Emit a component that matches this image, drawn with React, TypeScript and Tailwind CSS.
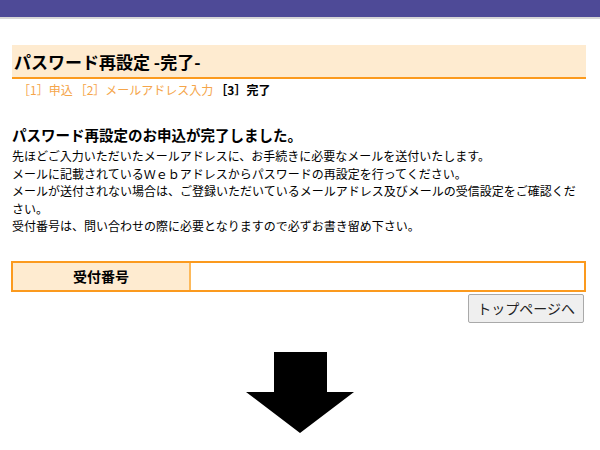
export default function App() {
  const font = { fontFamily: '"Noto Sans CJK JP", "Noto Sans", sans-serif' };
  return (
    <div className="w-[600px] h-[450px] bg-white text-black overflow-hidden" style={font}>
      {/* Header bar */}
      <div className="h-[17px] bg-[#4e4a97]" />
      <div className="h-[2px] bg-[#d6d6d6]" />

      <div className="pl-[12px] pr-[14px] pt-[26px]">
        {/* Title */}
        <div className="h-[34px] bg-[#feebd0] border-b-2 border-[#fb9a1e] flex items-center pl-[2px]">
          <h1 className="text-[17px] font-bold leading-none">パスワード再設定 -完了-</h1>
        </div>

        {/* Steps */}
        <div className="mt-[2px] pl-[6px] text-[12px] leading-[18px] flex gap-[2px]">
          <span className="text-[#f5a54a]">［1］申込</span>
          <span className="text-[#f5a54a]">［2］メールアドレス入力</span>
          <span className="font-bold">［3］完了</span>
        </div>

        {/* Message */}
        <h2 className="mt-[26px] text-[14.5px] font-bold leading-[20px]">
          パスワード再設定のお申込が完了しました。
        </h2>
        <p className="mt-[2px] text-[12px] leading-[17.5px]">
          先ほどご入力いただいたメールアドレスに、お手続きに必要なメールを送付いたします。
          <br />
          メールに記載されているＷｅｂアドレスからパスワードの再設定を行ってください。
          <br />
          メールが送付されない場合は、ご登録いただいているメールアドレス及びメールの受信設定をご確認ください。
          <br />
          受付番号は、問い合わせの際に必要となりますので必ずお書き留め下さい。
        </p>

        {/* Receipt number */}
        <div className="mt-[26px] -ml-[1px] flex h-[31px] border-2 border-[#fb9a1e]">
          <div className="w-[178px] bg-[#feebd0] border-r-2 border-[#fdb95a] flex items-center justify-center text-[14px] font-bold">
            受付番号
          </div>
          <div className="flex-1 bg-white" />
        </div>

        <div className="flex justify-end mt-[2px] mr-[2px]">
          <button className="h-[29px] px-[8px] bg-[#efefef] border border-[#a9a9a9] rounded-[2px] text-[14px] text-[#222]">
            トップページへ
          </button>
        </div>
      </div>

      {/* Arrow */}
      <div className="flex justify-center mt-[29px]">
        <svg width="108" height="81" viewBox="0 0 108 81">
          <polygon points="28,0 81,0 81,40 108,40 54,81 0,40 28,40" fill="#000" />
        </svg>
      </div>
    </div>
  );
}
